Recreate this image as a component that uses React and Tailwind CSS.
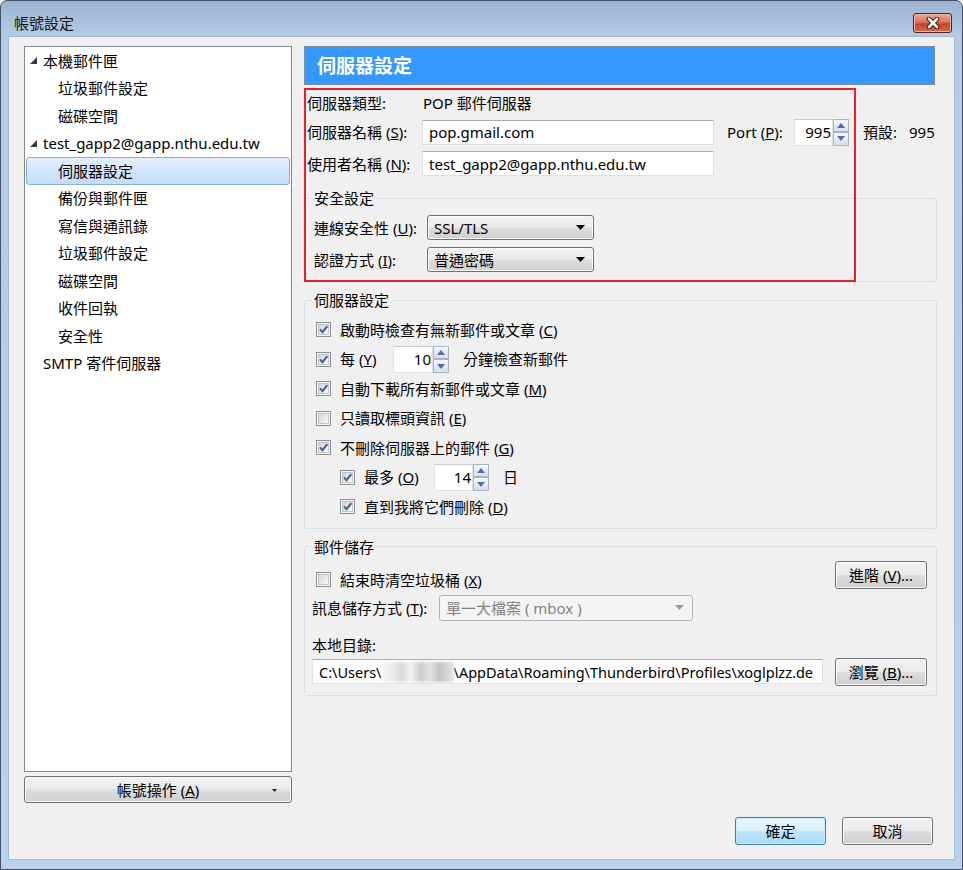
import React from "react";

const btnBg =
  "bg-[linear-gradient(to_bottom,#f2f2f2_0%,#ebebeb_48%,#dddddd_52%,#cfcfcf_100%)] shadow-[inset_0_0_0_1px_#fbfbfb]";

function Box({ checked }) {
  return (
    <svg width="15" height="15" viewBox="0 0 15 15" className="shrink-0">
      <defs>
        <linearGradient id="cbg" x1="0" y1="0" x2="1" y2="1">
          <stop offset="0" stopColor="#cfd3d8" />
          <stop offset="1" stopColor="#fafafa" />
        </linearGradient>
      </defs>
      <rect x="0.5" y="0.5" width="14" height="14" fill="#f6f6f6" stroke="#8e8f8f" />
      <rect x="2.5" y="2.5" width="10" height="10" fill="url(#cbg)" stroke="#b7bbc1" strokeWidth="0.8" />
      {checked && (
        <path d="M4 7.4 L6.5 10.2 L11.3 4.2" fill="none" stroke="#4a5f97" strokeWidth="2.1" />
      )}
    </svg>
  );
}

function Check({ checked, children }) {
  return (
    <div className="flex items-center gap-[9px] h-[22px]">
      <Box checked={checked} />
      <span className="whitespace-nowrap">{children}</span>
    </div>
  );
}

function SpinBtn({ up }) {
  return (
    <div className="flex-1 flex items-center justify-center border border-[#a9b5c5] bg-[linear-gradient(to_bottom,#f5f8fb,#d6dfea)]">
      <svg width="8" height="5" viewBox="0 0 8 5">
        {up ? (
          <polygon points="0,5 8,5 4,0" fill="#4f6ea8" />
        ) : (
          <polygon points="0,0 8,0 4,5" fill="#4f6ea8" />
        )}
      </svg>
    </div>
  );
}

function Spin({ value, w }) {
  return (
    <div className="flex h-[27px]">
      <div className={`${w} bg-white border border-[#dfe3e8] border-t-[#c8ccd2] flex items-center justify-end pr-[1px]`}>
        {value}
      </div>
      <div className="w-[16px] flex flex-col">
        <SpinBtn up />
        <SpinBtn />
      </div>
    </div>
  );
}

function Input({ w, children }) {
  return (
    <div className={`${w} h-[25px] bg-white border border-[#dbdfe6] border-t-[#abadb3] flex items-center pl-[6px] whitespace-nowrap overflow-hidden`}>
      {children}
    </div>
  );
}

function Select({ value, w, h = "h-[25px]", disabled }) {
  return (
    <div
      className={`${w} ${h} rounded-[3px] border flex items-center justify-between pl-[6px] pr-[8px] ${
        disabled
          ? "border-[#adb2b5] bg-[#f4f4f4] text-[#838383]"
          : `border-[#707070] ${btnBg}`
      }`}
    >
      <span className="whitespace-nowrap">{value}</span>
      <svg width="9" height="5" viewBox="0 0 9 5">
        <polygon points="0,0 9,0 4.5,5" fill={disabled ? "#9a9a9a" : "#000"} />
      </svg>
    </div>
  );
}

function Btn({ w, focused, children }) {
  return (
    <div
      className={`${w} h-[28px] shrink-0 rounded-[3px] border flex items-center justify-center ${
        focused
          ? "border-[#3c7fb1] bg-[linear-gradient(to_bottom,#eaf6fd_0%,#d9f0fc_48%,#bee6fd_52%,#a7d9f5_100%)] shadow-[inset_0_0_0_1px_#c9ecfc]"
          : `border-[#707070] ${btnBg}`
      }`}
    >
      {children}
    </div>
  );
}

function Group({ title, children, inner }) {
  return (
    <fieldset className="border border-[#d5dfe5] rounded-[3px] mt-[8px]">
      <legend className="ml-[7px] px-[2px] leading-[20px]">{title}</legend>
      <div className={inner}>{children}</div>
    </fieldset>
  );
}

const Tri = () => (
  <svg width="7" height="7" viewBox="0 0 7 7" className="shrink-0">
    <polygon points="7,0 7,7 0,7" fill="#3a3a3a" />
  </svg>
);

const tree = [
  { label: "本機郵件匣", lvl: 0 },
  { label: "垃圾郵件設定", lvl: 1 },
  { label: "磁碟空間", lvl: 1 },
  { label: "test_gapp2@gapp.nthu.edu.tw", lvl: 0 },
  { label: "伺服器設定", lvl: 1, sel: true },
  { label: "備份與郵件匣", lvl: 1 },
  { label: "寫信與通訊錄", lvl: 1 },
  { label: "垃圾郵件設定", lvl: 1 },
  { label: "磁碟空間", lvl: 1 },
  { label: "收件回執", lvl: 1 },
  { label: "安全性", lvl: 1 },
  { label: "SMTP 寄件伺服器", lvl: 2 },
];

export default function App() {
  return (
    <div className="w-[963px] h-[870px] flex flex-col overflow-hidden rounded-t-[7px] border border-[#41536b] bg-[linear-gradient(to_bottom,#9cb4d1_0px,#b4cbe6_36px,#b9d1ea_100%)] text-[15px] leading-[20px] text-black font-['Segoe_UI','Noto_Sans','Noto_Sans_CJK_TC',sans-serif]">
      {/* title bar */}
      <div className="h-[35px] shrink-0 flex items-end justify-between pl-[13px] pr-[10px] pb-[3px]">
        <span className="text-[#111]">帳號設定</span>
        <div className="w-[39px] h-[20px] rounded-[3px] border border-[#5a1d15] bg-[linear-gradient(to_bottom,#e9a897_0%,#d8775f_45%,#c4452a_55%,#d06a4a_100%)] flex items-center justify-center shadow-[inset_0_0_0_1px_#f0b7a8]">
          <svg width="14" height="12" viewBox="0 0 14 12">
            <path d="M3 2 L11 10 M11 2 L3 10" stroke="#4a1b14" strokeWidth="4.6" strokeLinecap="round" />
            <path d="M3 2 L11 10 M11 2 L3 10" stroke="#fff" strokeWidth="2.6" strokeLinecap="round" />
          </svg>
        </div>
      </div>

      {/* client area */}
      <div className="mx-[7px] h-[824px] shrink-0 bg-[#f0f0f0] border border-[#a4bad4] flex flex-col pt-[9px] pl-[15px] pr-[17px]">
        <div className="h-[757px] flex gap-[12px]">
          {/* left column */}
          <div className="w-[268px] flex flex-col">
            <div className="flex-1 bg-white border border-[#828790]">
              {tree.map((t, i) => (
                <div
                  key={i}
                  className={`h-[27.5px] flex items-center whitespace-nowrap ${
                    t.sel
                      ? "mx-px rounded-[3px] border border-[#84acdd] bg-[linear-gradient(to_bottom,#e4effd,#c4dcfb)]"
                      : ""
                  } ${t.lvl === 0 ? "pl-[5px] gap-[6px]" : t.lvl === 1 ? (t.sel ? "pl-[31px]" : "pl-[33px]") : "pl-[18px]"}`}
                >
                  {t.lvl === 0 && <Tri />}
                  <span>{t.label}</span>
                </div>
              ))}
            </div>
            <div className={`mt-[4px] h-[27px] rounded-[3px] border border-[#707070] ${btnBg} flex items-center justify-center relative`}>
              <span>
                帳號操作 (<u>A</u>)
              </span>
              <svg width="5" height="3" viewBox="0 0 5 3" className="absolute right-[14px] top-[12px]">
                <polygon points="0,0 5,0 2.5,3" fill="#222" />
              </svg>
            </div>
          </div>

          {/* right column */}
          <div className="w-[633px] flex flex-col relative">
            <div className="w-[631px] h-[39px] bg-[#3399ff] border border-[#7d8ea3] flex items-center pl-[12px] text-white text-[19px] font-bold">
              伺服器設定
            </div>

            <div className="mt-[8px] h-[20px] flex items-center pl-[3px]">
              <span className="w-[116px]">伺服器類型:</span>
              <span>POP 郵件伺服器</span>
            </div>

            <div className="mt-[5px] h-[28px] flex items-center pl-[3px]">
              <span className="w-[115px] whitespace-nowrap">
                伺服器名稱 (<u>S</u>):
              </span>
              <Input w="w-[292px]">pop.gmail.com</Input>
              <span className="ml-[13px] w-[67px] whitespace-nowrap">
                Port (<u>P</u>):
              </span>
              <Spin value="995" w="w-[39px]" />
              <span className="ml-[14px] w-[46px]">預設:</span>
              <span>995</span>
            </div>

            <div className="mt-[5px] h-[25px] flex items-center pl-[3px]">
              <span className="w-[115px] whitespace-nowrap">
                使用者名稱 (<u>N</u>):
              </span>
              <Input w="w-[292px]">test_gapp2@gapp.nthu.edu.tw</Input>
            </div>

            <fieldset className="border border-[#d5dfe5] rounded-[3px] mt-[12px]">
              <legend className="ml-[7px] px-[2px] leading-[20px]">安全設定</legend>
              <div className="pl-[9px] pt-[7px] pb-[9px] flex flex-col gap-[7px]">
                <div className="flex items-center">
                  <span className="w-[113px] whitespace-nowrap">
                    連線安全性 (<u>U</u>):
                  </span>
                  <Select w="w-[167px]" value="SSL/TLS" />
                </div>
                <div className="flex items-center">
                  <span className="w-[113px] whitespace-nowrap">
                    認證方式 (<u>I</u>):
                  </span>
                  <Select w="w-[167px]" value="普通密碼" />
                </div>
              </div>
            </fieldset>

            <Group title="伺服器設定" inner="pl-[11px] pt-[5px] pb-[6px]">
              <div className="h-[29.5px] flex items-center">
                <Check checked>
                  啟動時檢查有無新郵件或文章 (<u>C</u>)
                </Check>
              </div>
              <div className="h-[29.5px] flex items-center">
                <div className="w-[77px]">
                  <Check checked>
                    每 (<u>Y</u>)
                  </Check>
                </div>
                <Spin value="10" w="w-[40px]" />
                <span className="ml-[14px]">分鐘檢查新郵件</span>
              </div>
              <div className="h-[29.5px] flex items-center">
                <Check checked>
                  自動下載所有新郵件或文章 (<u>M</u>)
                </Check>
              </div>
              <div className="h-[29.5px] flex items-center">
                <Check>
                  只讀取標頭資訊 (<u>E</u>)
                </Check>
              </div>
              <div className="h-[29.5px] flex items-center">
                <Check checked>
                  不刪除伺服器上的郵件 (<u>G</u>)
                </Check>
              </div>
              <div className="h-[29.5px] flex items-center pl-[24px]">
                <div className="w-[94px]">
                  <Check checked>
                    最多 (<u>O</u>)
                  </Check>
                </div>
                <Spin value="14" w="w-[39px]" />
                <span className="ml-[14px]">日</span>
              </div>
              <div className="h-[29.5px] flex items-center pl-[24px]">
                <Check checked>
                  直到我將它們刪除 (<u>D</u>)
                </Check>
              </div>
            </Group>

            <Group title="郵件儲存" inner="pl-[7px] pr-[9px] pb-[9px]">
              <div className="mt-[4px] h-[30px] flex items-start justify-between">
                <div className="mt-[8px] ml-[4px]">
                  <Check>
                    結束時清空垃圾桶 (<u>X</u>)
                  </Check>
                </div>
                <Btn w="w-[92px]">
                  進階 (<u>V</u>)...
                </Btn>
              </div>
              <div className="mt-[4px] flex items-center">
                <span className="w-[127px] whitespace-nowrap">
                  訊息儲存方式 (<u>T</u>):
                </span>
                <Select w="w-[254px]" h="h-[26px]" value="單一大檔案 ( mbox )" disabled />
              </div>
              <div className="mt-[14px] h-[20px] flex items-center">本地目錄:</div>
              <div className="mt-[3px] h-[28px] flex items-center justify-between">
                <Input w="w-[511px]">
                  <span className="shrink-0 text-[14.5px]">C:\Users\</span>
                  <span className="shrink-0 inline-block w-[72px] h-[20px] bg-[linear-gradient(90deg,#f6f6f6_0%,#ececec_15%,#d8d8d8_28%,#f2f2f2_40%,#cccccc_54%,#e4e4e4_66%,#c2c2c2_80%,#e6e6e6_100%)] blur-[0.8px]" />
                  <span className="shrink-0 text-[14.5px]">\AppData\Roaming\Thunderbird\Profiles\xoglplzz.de</span>
                </Input>
                <Btn w="w-[92px]">
                  瀏覽 (<u>B</u>)...
                </Btn>
              </div>
            </Group>

            {/* red annotation box */}
            <div className="absolute left-0 top-[42px] w-[552px] h-[194px] border-2 border-[#e8202a] pointer-events-none" />
          </div>
        </div>

        <div className="mt-[14px] flex justify-end gap-[16px] pr-[4px]">
          <Btn w="w-[91px]" focused>
            確定
          </Btn>
          <Btn w="w-[91px]">取消</Btn>
        </div>
      </div>
    </div>
  );
}
